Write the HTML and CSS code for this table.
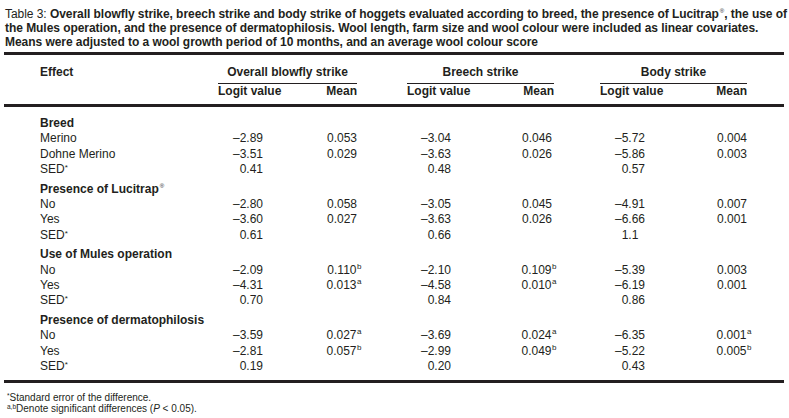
FILE: index.html
```html
<!DOCTYPE html>
<html lang="en">
<head>
<meta charset="utf-8">
<title>Table 3</title>
<link rel="stylesheet" href="styles.css">
</head>
<body>
<p class="caption"><span class="lead">Table 3:</span> <b>Overall blowfly strike, breech strike and body strike of hoggets evaluated according to breed, the presence of Lucitrap<span class="reg">®</span>, the use of<br>the Mules operation, and the presence of dermatophilosis. Wool length, farm size and wool colour were included as linear covariates.<br>Means were adjusted to a wool growth period of 10 months, and an average wool colour score</b></p>
<div class="table">
  <div class="thead">
    <div class="effect">Effect</div>
    <div class="group g1"><div class="gtitle">Overall blowfly strike</div><div class="subs"><span>Logit value</span><span>Mean</span></div></div>
    <div class="group g2"><div class="gtitle">Breech strike</div><div class="subs"><span>Logit value</span><span>Mean</span></div></div>
    <div class="group g3"><div class="gtitle">Body strike</div><div class="subs"><span>Logit value</span><span>Mean</span></div></div>
  </div>
  <div class="tbody">
    <div class="sec">
      <div class="row"><div class="lab head">Breed</div></div>
      <div class="row"><div class="lab">Merino</div><div class="n">–2.89</div><div class="n">0.053</div><div class="n">–3.04</div><div class="n">0.046</div><div class="n">–5.72</div><div class="n">0.004</div></div>
      <div class="row"><div class="lab">Dohne Merino</div><div class="n">–3.51</div><div class="n">0.029</div><div class="n">–3.63</div><div class="n">0.026</div><div class="n">–5.86</div><div class="n">0.003</div></div>
      <div class="row"><div class="lab">SED<span class="ast">*</span></div><div class="n">0.41</div><div class="n"></div><div class="n">0.48</div><div class="n"></div><div class="n">0.57</div><div class="n"></div></div>
    </div>
    <div class="sec">
      <div class="row"><div class="lab head">Presence of Lucitrap<span class="reg">®</span></div></div>
      <div class="row"><div class="lab">No</div><div class="n">–2.80</div><div class="n">0.058</div><div class="n">–3.05</div><div class="n">0.045</div><div class="n">–4.91</div><div class="n">0.007</div></div>
      <div class="row"><div class="lab">Yes</div><div class="n">–3.60</div><div class="n">0.027</div><div class="n">–3.63</div><div class="n">0.026</div><div class="n">–6.66</div><div class="n">0.001</div></div>
      <div class="row"><div class="lab">SED<span class="ast">*</span></div><div class="n">0.61</div><div class="n"></div><div class="n">0.66</div><div class="n"></div><div class="n dec1">1.1</div><div class="n"></div></div>
    </div>
    <div class="sec">
      <div class="row"><div class="lab head">Use of Mules operation</div></div>
      <div class="row"><div class="lab">No</div><div class="n">–2.09</div><div class="n">0.110<span class="sup">b</span></div><div class="n">–2.10</div><div class="n">0.109<span class="sup">b</span></div><div class="n">–5.39</div><div class="n">0.003</div></div>
      <div class="row"><div class="lab">Yes</div><div class="n">–4.31</div><div class="n">0.013<span class="sup">a</span></div><div class="n">–4.58</div><div class="n">0.010<span class="sup">a</span></div><div class="n">–6.19</div><div class="n">0.001</div></div>
      <div class="row"><div class="lab">SED<span class="ast">*</span></div><div class="n">0.70</div><div class="n"></div><div class="n">0.84</div><div class="n"></div><div class="n">0.86</div><div class="n"></div></div>
    </div>
    <div class="sec">
      <div class="row"><div class="lab head">Presence of dermatophilosis</div></div>
      <div class="row"><div class="lab">No</div><div class="n">–3.59</div><div class="n">0.027<span class="sup">a</span></div><div class="n">–3.69</div><div class="n">0.024<span class="sup">a</span></div><div class="n">–6.35</div><div class="n">0.001<span class="sup">a</span></div></div>
      <div class="row"><div class="lab">Yes</div><div class="n">–2.81</div><div class="n">0.057<span class="sup">b</span></div><div class="n">–2.99</div><div class="n">0.049<span class="sup">b</span></div><div class="n">–5.22</div><div class="n">0.005<span class="sup">b</span></div></div>
      <div class="row"><div class="lab">SED<span class="ast">*</span></div><div class="n">0.19</div><div class="n"></div><div class="n">0.20</div><div class="n"></div><div class="n">0.43</div><div class="n"></div></div>
    </div>
  </div>
</div>
<div class="notes">
  <p><span class="fsup">*</span>Standard error of the difference.</p>
  <p><span class="fsup">a,b</span>Denote significant differences (<i>P</i> &lt; 0.05).</p>
</div>
</body>
</html>
```
FILE: styles.css
```css
body {
  margin: 0;
  background: #ffffff;
  color: #231f20;
  font-family: "Liberation Sans", Arial, sans-serif;
}

.caption {
  margin: 0 0 3px 5px;
  padding-top: 7px;
  width: 782px;
  white-space: nowrap;
  font-size: 12px;
  line-height: 14px;
  letter-spacing: -0.05px;
}

.caption b {
  font-weight: bold;
}

.reg {
  font-size: 6px;
  vertical-align: 5px;
  line-height: 0;
  margin-left: 1px;
  font-weight: normal;
}

.table {
  margin-left: 4px;
  width: 780px;
}

.thead {
  display: grid;
  grid-template-columns: 178px 45px 94px 94px 101px 93px 102px;
  border-top: 3px solid #231f20;
  border-bottom: 3px solid #231f20;
  padding: 10px 0 6.5px 36px;
  font-size: 12px;
  font-weight: bold;
}

.effect {
  line-height: 15px;
}

.group {
  grid-column: span 2;
}

.g2 {
  margin-left: 50px;
  margin-right: -2px;
}

.g3 {
  margin-left: 48px;
}

.gtitle {
  text-align: center;
  line-height: 15px;
  padding-bottom: 2.5px;
  border-bottom: 1px solid #231f20;
}

.subs {
  display: flex;
  justify-content: space-between;
  line-height: 14px;
}

.tbody {
  padding: 9.2px 0 5.5px 36px;
  border-bottom: 3px solid #231f20;
}

.sec + .sec {
  margin-top: 4.4px;
}

.row {
  display: grid;
  grid-template-columns: 178px 45px 94px 94px 101px 93px 102px;
  height: 15.3px;
  line-height: 15.3px;
  font-size: 12px;
}

.lab {
  white-space: nowrap;
}

.head {
  font-weight: bold;
}

.n {
  text-align: right;
  white-space: nowrap;
}

.dec1 {
  padding-right: 0.556em;
}

.ast {
  font-size: 8px;
  vertical-align: 3px;
  line-height: 0;
}

.sup {
  display: inline-block;
  width: 0;
  font-size: 8px;
  line-height: 0;
  vertical-align: 5px;
  text-align: left;
  margin-left: 0.5px;
}

.notes {
  margin: 9.3px 0 0 7px;
  font-size: 10px;
  line-height: 11px;
}

.notes p {
  margin: 0;
}

.fsup {
  font-size: 6.5px;
  vertical-align: 3px;
  line-height: 0;
}
```
